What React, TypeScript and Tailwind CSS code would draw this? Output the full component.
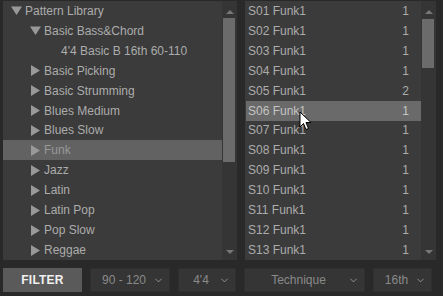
import { ChevronDown } from "lucide-react";

const tree = [
  { label: "Pattern Library", level: 0, open: true },
  { label: "Basic Bass&Chord", level: 1, open: true },
  { label: "4'4 Basic B 16th 60-110", level: 2 },
  { label: "Basic Picking", level: 1 },
  { label: "Basic Strumming", level: 1 },
  { label: "Blues Medium", level: 1 },
  { label: "Blues Slow", level: 1 },
  { label: "Funk", level: 1, selected: true },
  { label: "Jazz", level: 1 },
  { label: "Latin", level: 1 },
  { label: "Latin Pop", level: 1 },
  { label: "Pop Slow", level: 1 },
  { label: "Reggae", level: 1 },
];

const patterns = [
  ["S01 Funk1", "1"],
  ["S02 Funk1", "1"],
  ["S03 Funk1", "1"],
  ["S04 Funk1", "1"],
  ["S05 Funk1", "2"],
  ["S06 Funk1", "1"],
  ["S07 Funk1", "1"],
  ["S08 Funk1", "1"],
  ["S09 Funk1", "1"],
  ["S10 Funk1", "1"],
  ["S11 Funk1", "1"],
  ["S12 Funk1", "1"],
  ["S13 Funk1", "1"],
];

function Triangle({ open }: { open?: boolean }) {
  return (
    <svg width="11" height="11" viewBox="0 0 11 11" className="shrink-0">
      {open ? <path d="M0 1.5 L11 1.5 L5.5 10 Z" fill="#999" /> : <path d="M1 0 L10 5.5 L1 11 Z" fill="#999" />}
    </svg>
  );
}

function Scrollbar({ thumbTop, thumbHeight }: { thumbTop: number; thumbHeight: number }) {
  return (
    <div className="relative w-[15px] h-full bg-[#353535]">
      <svg width="8" height="4" viewBox="0 0 8 4" className="absolute left-[4px] top-[9px]">
        <path d="M0 4 L4 0 L8 4 Z" fill="#777" />
      </svg>
      <div className="absolute left-[1px] w-[12px] bg-[#6b6b6b]" style={{ top: thumbTop, height: thumbHeight }} />
      <svg width="8" height="4" viewBox="0 0 8 4" className="absolute left-[4px] bottom-[6px]">
        <path d="M0 0 L8 0 L4 4 Z" fill="#777" />
      </svg>
    </div>
  );
}

function Dropdown({ label, width }: { label: string; width: string }) {
  return (
    <div className={`${width} h-[24px] flex items-center bg-[#353535] border border-[#2f2f2f] text-[#8a8a8a] text-[12px]`}>
      <span className="flex-1 text-center pl-[4px]">{label}</span>
      <ChevronDown className="w-[11px] h-[11px] mr-[5px] text-[#999]" strokeWidth={2} />
    </div>
  );
}

export default function App() {
  return (
    <div
      className="relative w-[443px] h-[296px] bg-[#292929] pl-[3px] pt-[1px] flex flex-col overflow-hidden"
      style={{ fontFamily: '"Liberation Sans", Arial, sans-serif' }}
    >
      <div className="flex h-[259px] gap-[8px]">
        <div className="flex w-[234px] bg-[#3b3b3b]">
          <div className="flex-1 flex flex-col">
            {tree.map((t) => (
              <div
                key={t.label}
                className={`h-[20px] flex items-center gap-[3px] text-[12px] ${t.selected ? "bg-[#626262] text-[#999]" : "text-[#acacac]"}`}
                style={{ paddingLeft: t.level === 0 ? 8 : t.level === 1 ? 27 : 58 }}
              >
                {t.level < 2 && <Triangle open={t.open} />}
                <span>{t.label}</span>
              </div>
            ))}
          </div>
          <Scrollbar thumbTop={17} thumbHeight={144} />
        </div>
        <div className="flex w-[191px] bg-[#3b3b3b]">
          <div className="flex-1 flex flex-col pl-[1px]">
            {patterns.map(([name, n]) => (
              <div
                key={name}
                className={`h-[20px] flex items-center justify-between pl-[2px] pr-[12px] text-[12px] ${name.startsWith("S06") ? "bg-[#6a6a6a] text-[#c4c4c4]" : "text-[#acacac]"}`}
              >
                <span>{name}</span>
                <span>{n}</span>
              </div>
            ))}
          </div>
          <Scrollbar thumbTop={18} thumbHeight={49} />
        </div>
      </div>
      <div className="flex items-center gap-[8px] mt-[8px]">
        <button className="w-[79px] h-[24px] bg-[#5a5a5a] text-[#f0f0f0] text-[12px] font-bold tracking-[0.2px]">FILTER</button>
        <Dropdown label="90 - 120" width="w-[80px]" />
        <Dropdown label="4'4" width="w-[58px]" />
        <Dropdown label="Technique" width="w-[121px]" />
        <Dropdown label="16th" width="w-[59px]" />
      </div>
      <svg width="13" height="20" viewBox="0 0 13 20" className="absolute left-[299px] top-[111px]">
        <path d="M1 1 L1 16 L4.5 12.5 L7 18.5 L9.5 17.5 L7 11.5 L12 11.5 Z" fill="#fff" stroke="#000" strokeWidth="1" strokeLinejoin="round" />
      </svg>
    </div>
  );
}
